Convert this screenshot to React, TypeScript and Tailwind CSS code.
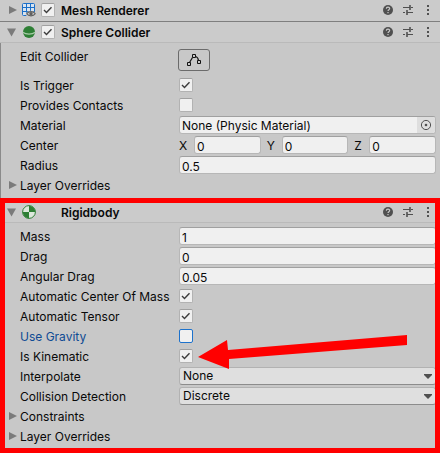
import { useId, useState, type ReactNode } from "react";
import { clsx } from "clsx";

function Foldout({ open = false, label }: { open?: boolean; label: string }) {
  return (
    <button type="button" aria-label={`Toggle ${label}`} aria-expanded={open} className="h-3 w-3 shrink-0">
      <svg viewBox="0 0 12 12" className="block h-3 w-3" fill="#7b7b7b">
        {open ? <path d="M1 2.5H10L5.5 10.5Z" /> : <path d="M3 2L11 6L3 10Z" />}
      </svg>
    </button>
  );
}

interface TickProps {
  id?: string;
  label?: string;
  initial?: boolean;
  focused?: boolean;
}

function Tick({ id, label, initial = false, focused = false }: TickProps) {
  const [on, setOn] = useState(initial);
  return (
    <span className="relative block h-3.5 w-3.5 shrink-0">
      <input
        id={id}
        type="checkbox"
        aria-label={label}
        checked={on}
        onChange={(e) => setOn(e.target.checked)}
        className={clsx(
          "block h-3.5 w-3.5 appearance-none rounded-[2px] border bg-[#f0f0f0]",
          focused ? "border-[#1d72cc]" : "border-[#b2b2b2] border-t-[#a0a0a0]"
        )}
      />
      {on && (
        <svg viewBox="0 0 14 14" className="pointer-events-none absolute inset-0" fill="none" stroke="#3c3c3c" strokeWidth="1.4">
          <path d="M3 7L5.5 9.5L10.5 4.2" />
        </svg>
      )}
    </span>
  );
}

function MeshIcon() {
  return (
    <svg viewBox="0 0 14 14" className="h-3.5 w-3.5" fill="none">
      <rect x="0.5" y="0.5" width="12" height="12" rx="1" fill="#d9e4ef" stroke="#1a6fc9" />
      <path d="M4.5 0V13M8.5 0V13M0 4.5H13M0 8.5H13" stroke="#1a6fc9" />
      <path d="M3.5 10.8C6 6.8 12 6.8 14 10.8V14H5Z" fill="#cbcbcb" />
      <path d="M4.8 10.8C6.5 8 11.5 8 13.2 10.8C11.5 13.6 6.5 13.6 4.8 10.8Z" fill="#d2d2d2" stroke="#606060" strokeWidth="1.2" />
      <circle cx="9" cy="10.8" r="1.7" fill="#606060" />
    </svg>
  );
}

function SphereIcon() {
  return (
    <svg viewBox="0 0 14 14" className="h-3.5 w-3.5" fill="#2e7f35">
      <circle cx="7" cy="7" r="6" />
      <path d="M0.8 7.2C4 9.7 10 9.7 13.2 7.2" fill="none" stroke="#a9cba9" strokeWidth="1.1" />
    </svg>
  );
}

function RigidbodyIcon() {
  return (
    <svg viewBox="0 0 14 14" className="h-3.5 w-3.5">
      <circle cx="7" cy="7" r="6.4" fill="#dce8dc" stroke="#2e7f35" strokeWidth="1" />
      <path d="M7 7V0.8A6.2 6.2 0 0 1 13.2 7ZM7 7V13.2A6.2 6.2 0 0 1 0.8 7Z" fill="#2e7f35" />
    </svg>
  );
}

interface HeaderProps {
  title: string;
  icon: ReactNode;
  open?: boolean;
  toggle?: boolean;
}

function ComponentHeader({ title, icon, open = false, toggle = false }: HeaderProps) {
  return (
    <header className="flex h-5 items-center bg-[#cbcbcb] px-1.5">
      <Foldout open={open} label={title} />
      <span className="ml-1 w-[19px] shrink-0">{icon}</span>
      <span className="w-5 shrink-0">{toggle && <Tick label={`Enable ${title}`} initial />}</span>
      <h2 className="grow pt-0.5 font-semibold">{title}</h2>
      <div className="flex items-center gap-2 text-[#505050]">
        <button type="button" aria-label={`${title} help`}>
          <svg viewBox="0 0 12 12" className="block h-3 w-3">
            <circle cx="6" cy="6" r="5" fill="currentColor" />
            <path d="M4.3 4.8C4.3 2.6 7.7 2.6 7.7 4.6C7.7 5.8 6 5.6 6 7.1" fill="none" stroke="#cbcbcb" strokeWidth="1.1" />
            <rect x="5.4" y="8" width="1.2" height="1.2" fill="#cbcbcb" />
          </svg>
        </button>
        <button type="button" aria-label={`${title} presets`}>
          <svg viewBox="0 0 12 12" className="block h-3 w-3" fill="none" stroke="currentColor">
            <path d="M1 3.5H8M9 3.5H11M1 8.5H3M5 8.5H11" />
            <path d="M8 1V6M5 6V11" strokeWidth="1.6" />
          </svg>
        </button>
        <button type="button" aria-label={`${title} menu`}>
          <svg viewBox="0 0 12 12" className="block h-3 w-3" fill="currentColor">
            <path d="M5 1H7V3H5ZM5 5H7V7H5ZM5 9H7V11H5Z" />
          </svg>
        </button>
      </div>
    </header>
  );
}

interface RowProps {
  label: string;
  active?: boolean;
  children: (id: string) => ReactNode;
}

function Row({ label, active = false, children }: RowProps) {
  const id = useId();
  return (
    <div className="flex h-5 items-center pr-1 pl-5">
      <label htmlFor={id} className={clsx("w-[159px] shrink-0 pt-0.5", active && "text-[#0f4b94]")}>
        {label}
      </label>
      {children(id)}
    </div>
  );
}

function FoldoutRow({ label }: { label: string }) {
  return (
    <div className="flex h-5 items-center gap-0.5 pl-1.5">
      <Foldout label={label} />
      <span className="pt-0.5">{label}</span>
    </div>
  );
}

function TextField({ id, value }: { id?: string; value: string }) {
  return (
    <input
      id={id}
      type="text"
      defaultValue={value}
      className="h-[18px] w-full min-w-0 grow rounded-[3px] border border-[#b7b7b7] border-t-[#a0a0a0] bg-[#f0f0f0] px-0.5 pt-0.5"
    />
  );
}

function TextRow({ label, value }: { label: string; value: string }) {
  return <Row label={label}>{(id) => <TextField id={id} value={value} />}</Row>;
}

function TickRow({ label, on = false, active = false }: { label: string; on?: boolean; active?: boolean }) {
  return (
    <Row label={label} active={active}>
      {(id) => <Tick id={id} initial={on} focused={active} />}
    </Row>
  );
}

function SelectRow({ label, options }: { label: string; options: string[] }) {
  return (
    <Row label={label}>
      {(id) => (
        <div className="relative grow">
          <select
            id={id}
            className="block h-[18px] w-full appearance-none rounded-[3px] border border-[#b2b2b2] border-b-[#8c8c8c] bg-[#dfdfdf] pr-5 pl-[3px] leading-4"
          >
            {options.map((option) => (
              <option key={option}>{option}</option>
            ))}
          </select>
          <svg viewBox="0 0 8 5" className="pointer-events-none absolute top-[7px] right-1 h-[5px] w-2" fill="#505050">
            <path d="M0 0H8V1L4 5L0 1Z" />
          </svg>
        </div>
      )}
    </Row>
  );
}

function AxisField({ axis }: { axis: string }) {
  return (
    <label className="flex min-w-0 flex-1 items-center">
      <span className="w-[15px] shrink-0 pt-0.5">{axis}</span>
      <TextField value="0" />
    </label>
  );
}

export default function App() {
  return (
    <main className="w-full bg-[#c8c8c8] font-['Inter','Liberation_Sans',sans-serif] text-xs leading-4 text-[#090909]">
      <div className="border-l border-[#8a8a8a] pb-[3px]">
        <div className="-ml-px">
          <section className="border-b border-[#7f7f7f] bg-[#cbcbcb] pb-px">
            <ComponentHeader title="Mesh Renderer" icon={<MeshIcon />} toggle />
          </section>

          <section>
            <div className="border-b border-[#bababa]">
              <ComponentHeader title="Sphere Collider" icon={<SphereIcon />} open toggle />
            </div>
            <div className="flex h-8 items-start pt-1.5 pl-5">
              <span className="w-[158px] shrink-0">Edit Collider</span>
              <button
                type="button"
                aria-label="Edit Collider"
                className="flex h-[22px] w-8 items-center justify-center rounded-[3px] border border-[#6b6b6b]"
              >
                <svg viewBox="0 0 16 14" className="h-3.5 w-4" fill="none" stroke="#111111">
                  <path d="M3.5 9.5L6.5 4.5M9.5 3.5Q12 4 12.5 7.5" strokeWidth="1.2" />
                  <path d="M1.5 9.5H4.5V12.5H1.5ZM6.5 1.5H9.5V4.5H6.5ZM11.5 7.5H14.5V10.5H11.5Z" />
                </svg>
              </button>
            </div>
            <TickRow label="Is Trigger" on />
            <TickRow label="Provides Contacts" />
            <Row label="Material">
              {(id) => (
                <div className="flex h-[18px] min-w-0 grow overflow-hidden rounded-[3px] border border-[#b7b7b7] border-t-[#a0a0a0] bg-[#f0f0f0]">
                  <input id={id} type="text" readOnly value="None (Physic Material)" className="min-w-0 grow px-0.5 pt-0.5" />
                  <button type="button" aria-label="Select material" className="flex w-[18px] items-center justify-center bg-[#dedede]">
                    <svg viewBox="0 0 12 12" className="h-3 w-3">
                      <circle cx="6" cy="6" r="4.6" fill="none" stroke="#505050" />
                      <circle cx="6" cy="6" r="1.3" fill="#505050" />
                    </svg>
                  </button>
                </div>
              )}
            </Row>
            <div role="group" aria-label="Center" className="flex h-5 items-center pr-1 pl-5">
              <span className="w-[159px] shrink-0 pt-0.5">Center</span>
              <div className="flex min-w-0 grow gap-1.5">
                <AxisField axis="X" />
                <AxisField axis="Y" />
                <AxisField axis="Z" />
              </div>
            </div>
            <TextRow label="Radius" value="0.5" />
            <FoldoutRow label="Layer Overrides" />
          </section>
        </div>
      </div>

      <section className="relative pt-1 pb-[7px]">
        <div className="mb-[3px] border-b border-[#bababa] bg-[#cbcbcb]">
          <ComponentHeader title="Rigidbody" icon={<RigidbodyIcon />} open />
        </div>
        <TextRow label="Mass" value="1" />
        <TextRow label="Drag" value="0" />
        <TextRow label="Angular Drag" value="0.05" />
        <TickRow label="Automatic Center Of Mass" on />
        <TickRow label="Automatic Tensor" on />
        <TickRow label="Use Gravity" active />
        <TickRow label="Is Kinematic" on />
        <SelectRow label="Interpolate" options={["None", "Interpolate", "Extrapolate"]} />
        <SelectRow label="Collision Detection" options={["Discrete", "Continuous", "Continuous Dynamic"]} />
        <FoldoutRow label="Constraints" />
        <FoldoutRow label="Layer Overrides" />

        {/* Highlight frame and arrow drawn over the component */}
        <div className="pointer-events-none absolute inset-0 border-5 border-[#ff0000]" />
        <svg viewBox="0 0 210 40" className="pointer-events-none absolute top-[134px] left-[198px] h-10 w-[210px]" fill="#ff0000">
          <path d="M0 25L29 8L30 18L209 3V13L31 27L31 37Z" />
        </svg>
      </section>
    </main>
  );
}
